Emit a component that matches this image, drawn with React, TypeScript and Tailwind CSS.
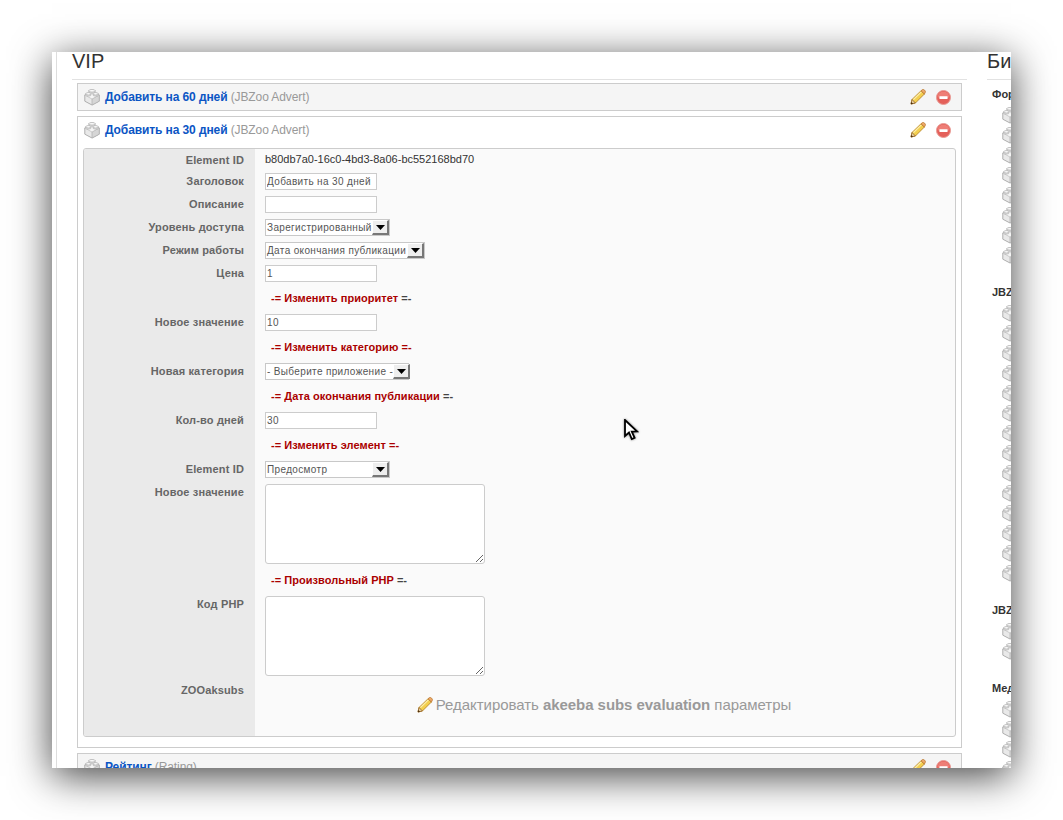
import React from "react";

const font = { fontFamily: '"Liberation Sans", Arial, sans-serif' };

function Cube({ className = "" }: { className?: string }) {
  return (
    <svg width="16" height="17" viewBox="0 0 16 17" className={className}>
      <path d="M0.8 6 L8 2.4 L15.2 6 V12.2 L8 16 L0.8 12.2 Z" fill="#e9e9e9" stroke="#aeaeae" strokeWidth="1" strokeLinejoin="round" />
      <path d="M8 10 V16 L15.2 12.2 V6 Z" fill="#d6d6d6" stroke="#b0b0b0" strokeWidth="0.7" strokeLinejoin="round" />
      <path d="M0.8 6 L8 10 L15.2 6 L8 2.4 Z" fill="#f5f5f5" stroke="#bcbcbc" strokeWidth="0.7" strokeLinejoin="round" />
      <path d="M4.8 1.6 V3.2 C4.8 4.3 11.2 4.3 11.2 3.2 V1.6 Z" fill="#f0f0f0" stroke="#b0b0b0" strokeWidth="0.7" />
      <ellipse cx="8" cy="1.8" rx="3.2" ry="1.3" fill="#fcfcfc" stroke="#b0b0b0" strokeWidth="0.8" />
      <path d="M1.8 4.6 V6.2 C1.8 7.3 7 7.3 7 6.2 V4.6 Z" fill="#f0f0f0" stroke="#b0b0b0" strokeWidth="0.7" />
      <ellipse cx="4.4" cy="4.8" rx="2.6" ry="1.2" fill="#fcfcfc" stroke="#b0b0b0" strokeWidth="0.8" />
      <path d="M9 4.6 V6.2 C9 7.3 14.2 7.3 14.2 6.2 V4.6 Z" fill="#e8e8e8" stroke="#b0b0b0" strokeWidth="0.7" />
      <ellipse cx="11.6" cy="4.8" rx="2.6" ry="1.2" fill="#fcfcfc" stroke="#b0b0b0" strokeWidth="0.8" />
    </svg>
  );
}

function Pencil({ className = "" }: { className?: string }) {
  return (
    <svg width="16" height="16" viewBox="0 0 16 16" className={className}>
      <path d="M1 15 L2 10.5 L11 1.8 L14.4 5 L5.4 14 Z" fill="#f3cf4e" stroke="#b9862a" strokeWidth="0.9" strokeLinejoin="round" />
      <path d="M3.4 10.6 L11.6 2.6" stroke="#fbeeae" strokeWidth="1.3" />
      <path d="M11 1.8 L12.3 0.7 C13 0.2 13.8 0.4 14.6 1.2 C15.5 2.1 15.7 3 15.1 3.7 L14.4 5 Z" fill="#eda86a" stroke="#b9762a" strokeWidth="0.8" />
      <path d="M1 15 L2 10.5 L5.4 14 Z" fill="#e8cfa0" stroke="#8a5a20" strokeWidth="0.7" />
      <path d="M0.8 15.2 L1.3 13 L3.1 14.7 Z" fill="#4a2d10" />
    </svg>
  );
}

function Minus({ className = "" }: { className?: string }) {
  return (
    <svg width="15" height="15" viewBox="0 0 15 15" className={className}>
      <circle cx="7.5" cy="7.5" r="7" fill="#e4605a" stroke="#e89a94" strokeWidth="1" />
      <path d="M1.5 7.5 A6 6 0 0 1 13.5 7.5 Z" fill="#ee7e76" />
      <rect x="3.4" y="6.2" width="8.2" height="2.7" rx="0.4" fill="#ffffff" />
    </svg>
  );
}

function Arrow() {
  return (
    <span className="flex h-full w-[17px] shrink-0 items-center justify-center border-t border-l border-t-white border-l-white border-r-2 border-b-2 border-r-[#777] border-b-[#777] bg-[#eeeeee]">
      <svg width="9" height="5" viewBox="0 0 9 5">
        <path d="M0 0 H9 L4.5 5 Z" fill="#000" />
      </svg>
    </span>
  );
}

function Select({ text, w }: { text: string; w: string }) {
  return (
    <div className={`flex h-[17px] items-center justify-between border border-[#c8c8c8] bg-white pl-[1px] text-[10px] leading-none tracking-[0.35px] text-[#555] ${w}`}>
      <span className="whitespace-nowrap">{text}</span>
      <Arrow />
    </div>
  );
}

function Input({ value = "" }: { value?: string }) {
  return (
    <input
      readOnly
      value={value}
      style={font}
      className="box-border h-[17px] w-[112px] border border-[#cccccc] bg-white px-[1px] text-[10px] tracking-[0.35px] text-[#555] outline-none"
    />
  );
}

function Row({ label, h, children, top }: { label?: string; h: string; children?: React.ReactNode; top?: string }) {
  return (
    <div className={`flex ${h}`}>
      <div className={`flex w-[171px] shrink-0 justify-end bg-[#eaeaea] pr-[11px] text-[11px] font-bold leading-[14px] tracking-[0.15px] text-[#666] ${top ?? "items-center pb-[1px]"}`}>
        {label}
      </div>
      <div className={`flex min-w-0 flex-1 pl-[10px] ${top ? "items-start" : "items-center"}`}>{children}</div>
    </div>
  );
}

function Sep({ h, text, tail }: { h: string; text: string; tail?: string }) {
  return (
    <Row h={h}>
      <span className="pl-[6px] text-[11px] font-bold leading-[14px] tracking-[0.05px] text-[#aa0000]">
        -= {text} <span className={tail ?? "text-[#aa0000]"}>=-</span>
      </span>
    </Row>
  );
}

function Head({ title, kind, h }: { title: string; kind: string; h: string }) {
  return (
    <div className={`flex items-center pl-[6px] pr-[10px] ${h}`}>
      <Cube />
      <span className="ml-[5px] whitespace-nowrap text-[12px] leading-[14px] tracking-[-0.1px]">
        <span className="font-bold text-[#0b55c4]">{title}</span>{" "}
        <span className="text-[#999]">({kind})</span>
      </span>
      <span className="ml-auto flex items-center gap-[10px]">
        <Pencil />
        <Minus />
      </span>
    </div>
  );
}

function Side({ label, n }: { label: string; n: number }) {
  return (
    <div className="mb-[20px]">
      <div className="mb-[4px] pl-[5px] text-[11px] font-bold leading-[14px] text-[#333]">{label}</div>
      {Array.from({ length: n }).map((_, i) => (
        <div key={i} className="flex h-[20px] items-center pl-[15px]">
          <Cube />
        </div>
      ))}
    </div>
  );
}

export default function App() {
  return (
    <div style={font} className="h-[820px] w-[1063px] overflow-hidden bg-white pl-[52px] pt-[52px]">
      <div className="relative flex h-[716px] w-[959px] overflow-hidden bg-white pl-[4px] shadow-[0_8px_38px_rgba(0,0,0,0.75)]">
        <div className="w-[911px] shrink-0 border-l border-[#dddddd] pl-[15px]">
          <div className="h-[28px] border-b border-[#e2e2e2] text-[20px] leading-[18px] text-[#333]">VIP</div>
          <div className="mt-[3px] px-[5px]">
            <div className="mb-[5px] border border-[#cccccc] bg-[#f5f5f5]">
              <Head title="Добавить на 60 дней" kind="JBZoo Advert" h="h-[26px]" />
            </div>
            <div className="mb-[5px] border border-[#cccccc] bg-white px-[5px] pb-[10px]">
              <div className="-mx-[5px]">
                <Head title="Добавить на 30 дней" kind="JBZoo Advert" h="h-[26px] mb-[5px]" />
              </div>
              <div className="overflow-hidden rounded-[3px] border border-[#cccccc] bg-[#fafafa]">
                <Row label="Element ID" h="h-[21px]" top="items-center">
                  <span className="self-center text-[11px] leading-none text-[#333]">b80db7a0-16c0-4bd3-8a06-bc552168bd70</span>
                </Row>
                <Row label="Заголовок" h="h-[23px]"><Input value="Добавить на 30 дней" /></Row>
                <Row label="Описание" h="h-[23px]"><Input /></Row>
                <Row label="Уровень доступа" h="h-[23px]"><Select text="Зарегистрированный" w="w-[125px]" /></Row>
                <Row label="Режим работы" h="h-[23px]"><Select text="Дата окончания публикации" w="w-[160px]" /></Row>
                <Row label="Цена" h="h-[23px]"><Input value="1" /></Row>
                <Sep h="h-[25px]" text="Изменить приоритет" tail="text-[#444]" />
                <Row label="Новое значение" h="h-[25px]"><Input value="10" /></Row>
                <Sep h="h-[24px]" text="Изменить категорию" />
                <Row label="Новая категория" h="h-[25px]"><Select text="- Выберите приложение -" w="w-[144px]" /></Row>
                <Sep h="h-[24px]" text="Дата окончания публикации" tail="text-[#444]" />
                <Row label="Кол-во дней" h="h-[25px]"><Input value="30" /></Row>
                <Sep h="h-[24px]" text="Изменить элемент" />
                <Row label="Element ID" h="h-[25px]"><Select text="Предосмотр" w="w-[125px]" /></Row>
                <Row label="Новое значение" h="h-[88px]" top="items-start pt-[3px]">
                  <textarea readOnly className="mt-[2px] box-border block h-[80px] w-[220px] rounded-[3px] border border-[#cccccc] bg-white outline-none" />
                </Row>
                <Sep h="h-[20px]" text="Произвольный PHP" tail="text-[#444]" />
                <Row label="Код PHP" h="h-[92px]" top="items-start pt-[7px]">
                  <textarea readOnly className="mt-[6px] box-border block h-[80px] w-[220px] rounded-[3px] border border-[#cccccc] bg-white outline-none" />
                </Row>
                <Row label="ZOOaksubs" h="h-[54px]" top="items-start pt-[1px]">
                  <div className="mt-[14px] flex w-full items-center justify-center pr-[12px] text-[15px] leading-[18px] tracking-[-0.05px] text-[#999]">
                    <Pencil className="mr-[3px]" />
                    <span>Редактировать <b>akeeba subs evaluation</b> параметры</span>
                  </div>
                </Row>
              </div>
            </div>
            <div className="border border-[#cccccc] bg-[#f5f5f5]">
              <Head title="Рейтинг" kind="Rating" h="h-[26px]" />
            </div>
          </div>
        </div>
        <div className="ml-[20px] w-[120px] shrink-0 whitespace-nowrap">
          <div className="mb-[7px] h-[28px] border-b border-[#e2e2e2] text-[20px] leading-[18px] text-[#333]">Биллинг</div>
          <Side label="Формы" n={8} />
          <Side label="JBZoo" n={14} />
          <Side label="JBZoo" n={2} />
          <Side label="Медиа" n={4} />
        </div>
        <svg width="16" height="22" viewBox="0 0 16 22" className="absolute left-[571px] top-[367px] drop-shadow-[0_0_1px_rgba(0,0,0,0.5)]">
          <path d="M2 1 V17 L6 13.5 L8.8 20 L11.6 18.8 L8.8 12.6 L14 12.4 Z" fill="#fff" stroke="#000" strokeWidth="1.8" strokeLinejoin="miter" />
        </svg>
      </div>
    </div>
  );
}
